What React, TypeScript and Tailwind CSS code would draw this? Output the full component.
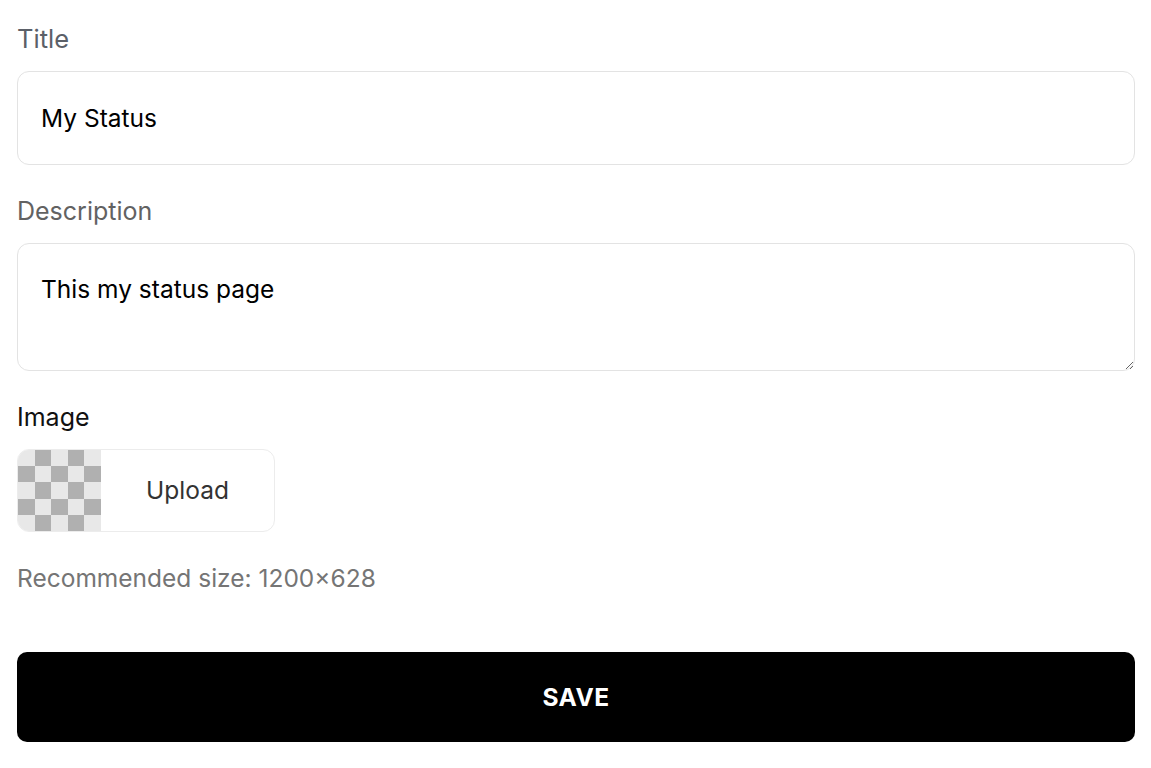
import React from "react";

const cells = Array.from({ length: 25 }, (_, i) => i);

function Checker() {
  return (
    <div className="grid grid-cols-5 grid-rows-5 w-[83px] h-full shrink-0">
      {cells.map((i) => {
        const r = Math.floor(i / 5);
        const c = i % 5;
        const dark = (r + c) % 2 === 1;
        return <div key={i} className={dark ? "bg-[#b0b0b0]" : "bg-[#e8e8e8]"} />;
      })}
    </div>
  );
}

export default function App() {
  return (
    <div
      className="bg-white min-h-screen pl-[17px] pr-[16px] pt-[21px] text-[24.5px]"
      style={{ fontFamily: "Inter, 'Noto Sans', sans-serif" }}
    >
      {/* Title */}
      <label className="block text-[25.5px] leading-[36px] text-[#5b6068] mb-[14px]">Title</label>
      <input
        defaultValue="My Status"
        className="block w-full h-[94px] border border-[#e3e3e3] rounded-[12px] px-[23px] text-[24.5px] text-black outline-none"
      />

      {/* Description */}
      <label className="block text-[25px] leading-[36px] text-[#626262] mt-[28px] mb-[14px]">Description</label>
      <textarea
        defaultValue="This my status page"
        className="block w-full h-[128px] border border-[#e3e3e3] rounded-[12px] px-[23px] pt-[27px] leading-[36px] text-[24.5px] text-black outline-none resize-y"
      />

      {/* Image */}
      <label className="block text-[25px] leading-[36px] text-[#111] mt-[28px] mb-[14px]">Image</label>
      <div className="flex w-[258px] h-[83px] border border-[#ececec] rounded-[12px] overflow-hidden">
        <Checker />
        <div className="flex-1 flex items-center justify-center text-[#333]">Upload</div>
      </div>
      <p className="leading-[36px] text-[#757575] mt-[28px]">Recommended size: 1200×628</p>

      <button className="mt-[56px] w-full h-[90px] bg-black rounded-[10px] text-white font-bold tracking-[0.02em]">
        SAVE
      </button>
    </div>
  );
}
